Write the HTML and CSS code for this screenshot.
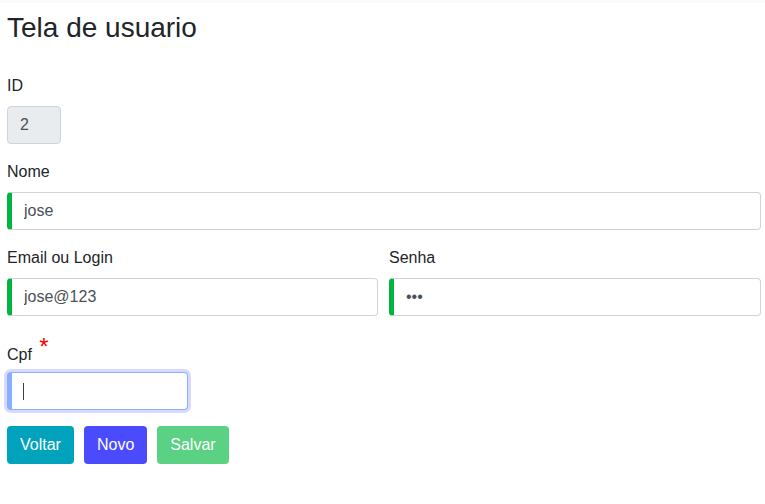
FILE: index.html
```html
<!DOCTYPE html>
<html lang="pt">
<head>
<meta charset="utf-8">
<title>Tela de usuario</title>
<link rel="stylesheet" href="styles.css">
</head>
<body>
<div class="topbar"></div>
<main class="page">
  <h3 class="title">Tela de usuario</h3>
  <form class="form">
    <div class="group">
      <label class="label">ID</label>
      <input class="field field-id" type="text" value="2" disabled>
    </div>
    <div class="group">
      <label class="label">Nome</label>
      <input class="field valid" type="text" value="jose">
    </div>
    <div class="row">
      <div class="group">
        <label class="label">Email ou Login</label>
        <input class="field valid" type="text" value="jose@123">
      </div>
      <div class="group">
        <label class="label">Senha</label>
        <input class="field valid" type="password" value="abc">
      </div>
    </div>
    <div class="group">
      <label class="label label-req">Cpf <span class="req">*</span></label>
      <div class="field field-cpf focused"><span class="caret"></span></div>
    </div>
    <div class="actions">
      <button type="button" class="btn btn-voltar">Voltar</button>
      <button type="button" class="btn btn-novo">Novo</button>
      <button type="button" class="btn btn-salvar">Salvar</button>
    </div>
  </form>
</main>
</body>
</html>
```
FILE: styles.css
```css
* { box-sizing: border-box; }
html, body { margin: 0; padding: 0; background: #fff; }
body {
  font-family: "Liberation Sans", Arial, sans-serif;
  font-size: 16px;
  line-height: 24px;
  color: #212529;
}
.topbar { height: 3px; background: #f8f9fa; }
.page { padding: 0 4px 0 7px; }
.title {
  margin: 8px 0 0 0;
  font-size: 28px;
  line-height: 33.6px;
  font-weight: 400;
  color: #212529;
}
.form { margin-top: 29px; }
.group { margin-bottom: 16px; display: flex; flex-direction: column; align-items: stretch; }
.label { display: block; margin-bottom: 8px; height: 24px; }
.label-req { margin-top: 8px; line-height: 24px; }
.req { color: #ff0000; font-size: 24px; line-height: 1; position: relative; top: -5px; margin-left: 3px; }
.row { display: grid; grid-template-columns: 371px 1fr; column-gap: 11px; }
.field {
  display: block;
  width: 100%;
  height: 38px;
  padding: 6px 12px;
  font-family: inherit;
  font-size: 16px;
  line-height: 24px;
  color: #495057;
  background: #fff;
  border: 1px solid #ced4da;
  border-radius: 4px;
  outline: none;
}
.field.valid { border-left: 5px solid #00b440; }
.field-id { width: 54px; background: #e9ecef; color: #495057; }
.field-cpf {
  width: 181px;
  position: relative;
  border-color: #86b0ff;
  border-left: 5px solid #86b0ff;
  box-shadow: 0 0 0 3px rgba(0, 0, 255, 0.15);
}
.caret {
  position: absolute;
  left: 11px;
  top: 10px;
  width: 1px;
  height: 17px;
  background: #3a3f44;
}
.actions { display: flex; gap: 10px; }
.btn {
  height: 38px;
  padding: 6px 12px;
  font-family: inherit;
  font-size: 16px;
  line-height: 24px;
  color: #fff;
  border: 1px solid transparent;
  border-radius: 4px;
}
.btn-voltar { background: #00a3bb; }
.btn-novo { background: #4a4aff; }
.btn-salvar { background: #5ad183; }
```
